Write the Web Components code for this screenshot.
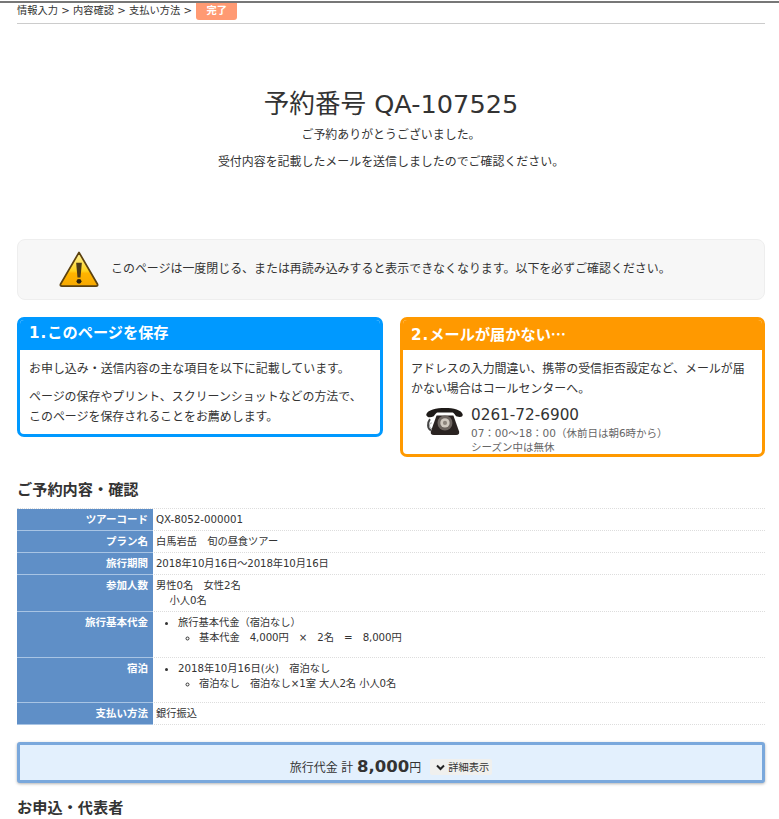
<!DOCTYPE html>
<html lang="ja">
<head>
<meta charset="utf-8">
<title>予約番号 QA-107525</title>
<style>
  html, body { margin: 0; padding: 0; background: #fff; }
  body {
    height: 819px;
    overflow: hidden;
    font-family: "DejaVu Sans", "Noto Sans CJK JP", sans-serif;
    color: #333;
    font-size: 11.95px;
  }
  page-shell { height: 819px; }
</style>
</head>
<body>
<page-shell>
  <step-trail>
    <span>情報入力</span><span>内容確認</span><span>支払い方法</span>
  </step-trail>
  <thanks-block number="予約番号 QA-107525">
    <p>ご予約ありがとうございました。</p>
    <p>受付内容を記載したメールを送信しましたのでご確認ください。</p>
  </thanks-block>
  <notice-box>このページは一度閉じる、または再読み込みすると表示できなくなります。以下を必ずご確認ください。</notice-box>
  <card-pair>
    <info-card color="#0099ff">
      <span slot="heading"><span style="letter-spacing:1px">1.</span>このページを保存</span>
      <p style="margin-bottom:8px">お申し込み・送信内容の主な項目を以下に記載しています。</p>
      <p style="margin-bottom:7px">ページの保存やプリント、スクリーンショットなどの方法で、<br>このページを保存されることをお薦めします。</p>
    </info-card>
    <info-card color="#ff9900" style="--card-pad:8px">
      <span slot="heading"><span style="letter-spacing:1px">2.</span>メールが届かない<span style="font-family:'Noto Sans CJK JP',sans-serif">…</span></span>
      <p style="margin-bottom:6px">アドレスの入力間違い、携帯の受信拒否設定など、メールが届かない場合はコールセンターへ。</p>
      <call-center tel="0261-72-6900">
        07：00～18：00（休前日は朝6時から）<br>シーズン中は無休
      </call-center>
    </info-card>
  </card-pair>
  <section-title style="margin-top:23px">ご予約内容・確認</section-title>
  <detail-table>
    <detail-row label="ツアーコード">QX-8052-000001</detail-row>
    <detail-row label="プラン名">白馬岩岳　旬の昼食ツアー</detail-row>
    <detail-row label="旅行期間"><span style="letter-spacing:-.14px">2018年10月16日～2018年10月16日</span></detail-row>
    <detail-row label="参加人数">男性0名　女性2名<br>　&nbsp;小人0名</detail-row>
    <detail-row label="旅行基本代金" tall>
      <fee-list item="旅行基本代金（宿泊なし）"><span style="letter-spacing:-.1px">基本代金　4,000円　×　2名　=　8,000円</span></fee-list>
    </detail-row>
    <detail-row label="宿泊" tall style="--tall-pad:11px">
      <fee-list item="2018年10月16日(火)　宿泊なし"><span style="letter-spacing:-.05px">宿泊なし　宿泊なし×1室 大人2名 小人0名</span></fee-list>
    </detail-row>
    <detail-row label="支払い方法">銀行振込</detail-row>
  </detail-table>
  <total-bar amount="8,000"></total-bar>
  <section-title style="margin-top:15px">お申込・代表者</section-title>
</page-shell>

<script>
function define(name, html, attrs) {
  const template = document.createElement("template");
  template.innerHTML = html;
  customElements.define(name, class extends HTMLElement {
    constructor() {
      super();
      this.attachShadow({ mode: "open" });
      this.shadowRoot.appendChild(template.content.cloneNode(true));
      (attrs || []).forEach((a) => {
        const el = this.shadowRoot.querySelector("#" + a);
        if (el) el.textContent = this.getAttribute(a) ?? "";
      });
      if (this.getAttribute("color")) {
        this.style.setProperty("--card-color", this.getAttribute("color"));
      }
    }
  });
}

define("page-shell", `
  <style>
    :host { display: block; padding: 0 14px 0 17px; border-top: 2px solid #777; margin-top: 1px; }
  </style>
  <slot></slot>
`);

define("step-trail", `
  <style>
    :host {
      display: flex;
      height: 20px;
      align-items: flex-start;
      border-bottom: 1px solid #ccc;
      font-size: 10.24px;
      line-height: 15px;
      color: #333;
    }
    ::slotted(span)::after { content: " > "; white-space: pre; }
    #done {
      margin-left: 1px;
      width: 41px;
      height: 17px;
      background: #ff9a73;
      border-radius: 0 0 3px 3px;
      color: #fff;
      font-weight: bold;
      text-align: center;
      line-height: 14px;
    }
  </style>
  <slot></slot>
  <div id="done">完了</div>
`);

define("thanks-block", `
  <style>
    :host { display: block; text-align: center; padding-top: 61px; height: 154px; }
    h1 { margin: 0 0 -1px; font-size: 25.6px; line-height: 38px; font-weight: 400; color: #333; }
    ::slotted(p) { margin: 0; line-height: 27px; }
  </style>
  <h1 id="number"></h1>
  <slot></slot>
`, ["number"]);

define("notice-box", `
  <style>
    :host {
      display: flex;
      align-items: center;
      box-sizing: border-box;
      height: 61px;
      padding: 0 0 4px 40px;
      gap: 11px;
      background: #f7f7f7;
      border: 1px solid #eee;
      border-radius: 8px;
    }
    svg { width: 42px; height: 38px; flex: none; margin-top: 2px; }
  </style>
  <svg viewBox="0 0 44 40">
    <defs>
      <linearGradient id="tri" x1="0" y1="0" x2="0" y2="1">
        <stop offset="0" stop-color="#fff3a0"/>
        <stop offset=".55" stop-color="#ffd21e"/>
        <stop offset=".62" stop-color="#ffb400"/>
        <stop offset="1" stop-color="#f6a800"/>
      </linearGradient>
    </defs>
    <path d="M22 2.5 L41.5 36 Q42 38 40 38 L4 38 Q2 38 2.5 36 Z" fill="url(#tri)" stroke="#5c4210" stroke-width="1.8" stroke-linejoin="round"/>
    <path d="M19 13.5 h6 l-1.4 15.5 h-3.2 Z" fill="#4a3a18"/>
    <circle cx="22" cy="33" r="2.6" fill="#2b2210"/>
  </svg>
  <div><slot></slot></div>
`);

define("card-pair", `
  <style>
    :host {
      display: grid;
      grid-template-columns: 366px 365px;
      justify-content: space-between;
      align-items: start;
      margin-top: 17px;
    }
  </style>
  <slot></slot>
`);

define("info-card", `
  <style>
    :host {
      display: block;
      box-sizing: border-box;
      border: 3px solid var(--card-color);
      border-radius: 7px;
      overflow: hidden;
    }
    h2 {
      margin: 0;
      height: 30px;
      background: var(--card-color);
      color: #fff;
      font-size: 15.2px;
      line-height: 26px;
      font-weight: bold;
      padding-left: var(--card-pad, 9px);
    }
    #body { padding: 9px 9px 0 var(--card-pad, 9px); line-height: 20px; }
    ::slotted(p) { margin: 0 0 7px; }
  </style>
  <h2><slot name="heading"></slot></h2>
  <div id="body"><slot></slot></div>
`);

define("call-center", `
  <style>
    :host { display: flex; gap: 7px; padding-left: 14px; }
    svg { width: 39px; height: 29px; flex: none; margin-top: 2px; }
    #tel { font-size: 15.25px; line-height: 20px; color: #333; }
    #note { font-size: 10.5px; line-height: 14px; color: #666; margin-top: 1px; }
  </style>
  <svg viewBox="0 0 41 31">
    <path d="M5 13 C2 17 2 23 6 25" fill="none" stroke="#444" stroke-width="2"/>
    <path d="M7 17 C3 17 4 24 8 23" fill="none" stroke="#999" stroke-width="1"/>
    <path d="M1 8 C2 3 12 1 21 1 C30 1 39 3 40 8 C40 11 37 11 33 10 C31 8 31 6 28 6 L14 6 C11 6 11 8 9 10 C5 12 1 11 1 8 Z" fill="#1e1a18"/>
    <path d="M12 9 L30 9 L36 26 Q37 30 33 30 L9 30 Q5 30 6 26 Z" fill="#2a2321"/>
    <circle cx="21" cy="17" r="8" fill="#6d6560"/>
    <circle cx="21" cy="17" r="5" fill="#cfc8bf"/>
    <circle cx="21" cy="17" r="2.2" fill="#8d857d"/>
  </svg>
  <div>
    <div id="tel"></div>
    <div id="note"><slot></slot></div>
  </div>
`, ["tel"]);

define("section-title", `
  <style>
    :host { display: block; font-size: 15.2px; line-height: 20px; font-weight: bold; color: #333; }
  </style>
  <slot></slot>
`);

define("detail-table", `
  <style>
    :host { display: block; margin-top: 8px; font-size: 10.24px; border-top: 1px dotted #ddd; }
  </style>
  <slot></slot>
`);

define("detail-row", `
  <style>
    :host {
      display: grid;
      grid-template-columns: 136px 1fr;
      border-bottom: 1px dotted #ddd;
    }
    #label {
      background: #5f8fc7;
      color: #fff;
      font-size: 10.5px;
      font-weight: bold;
      text-align: right;
      padding: 3px 5px 3px 0;
      line-height: 14px;
      box-shadow: 0 1px 0 #a8c4e4;
    }
    #value { padding: 3px 3px 3px; line-height: 15px; color: #333; }
    :host([tall]) #value { padding-bottom: var(--tall-pad, 12px); }
  </style>
  <div id="label"></div>
  <div id="value"><slot></slot></div>
`, ["label"]);

define("fee-list", `
  <style>
    :host { display: block; }
    ul { margin: 0; padding-left: 22px; }
    ul ul { padding-left: 21px; list-style: circle; }
    li { line-height: 15px; }
  </style>
  <ul><li><span id="item"></span>
    <ul><li><slot></slot></li></ul>
  </li></ul>
`, ["item"]);

define("total-bar", `
  <style>
    :host {
      display: flex;
      align-items: flex-end;
      justify-content: center;
      box-sizing: border-box;
      height: 41px;
      margin-top: 17px;
      padding: 0 0 5px 0;
      background: #e3f0fd;
      border: 3px solid #7aa8dc;
      border-radius: 3px;
      box-shadow: 0 1px 3px rgba(0,0,0,.3);
      line-height: 18px;
    }
    #sum { margin-bottom: -2px; }
    b { font-size: 16.5px; color: #333; }
    #more {
      display: inline-flex;
      align-items: center;
      gap: 3px;
      margin-left: 9px;
      padding: 0 3px 0 6px;
      background: #f0f0ee;
      font-size: 10.24px;
      line-height: 16px;
      border-radius: 2px;
    }
    svg { width: 9px; height: 7px; }
  </style>
  <span id="sum">旅行代金 計 <b id="amount"></b>円</span>
  <span id="more">
    <svg viewBox="0 0 9 7"><path d="M1 1.5 L4.5 5 L8 1.5" fill="none" stroke="#222" stroke-width="2"/></svg>詳細表示
  </span>
`, ["amount"]);
</script>
</body>
</html>
